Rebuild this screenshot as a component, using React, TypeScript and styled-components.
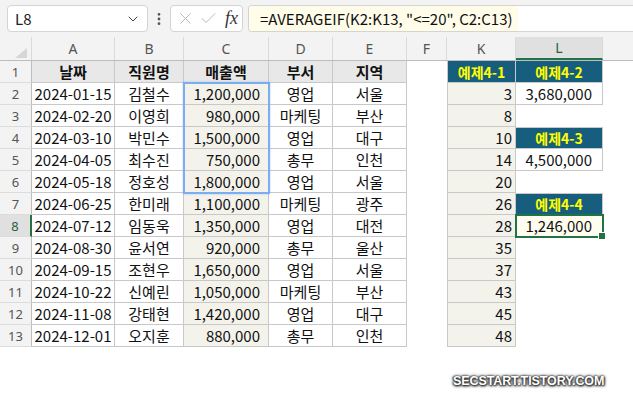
import styled, { createGlobalStyle } from 'styled-components';
import { ChevronDown, EllipsisVertical, X, Check } from 'lucide-react';

const GlobalStyle = createGlobalStyle`
  html, body { margin: 0; padding: 0; background: #fff; }
  body { font-family: "Noto Sans CJK KR", "Noto Sans", sans-serif; color: #111; }
  * { box-sizing: border-box; }
`;

const COLS = '32px 83px 69px 85px 64px 74px 40px 69px 87px 1fr';

const Page = styled.div`
  position: relative;
  width: 633px;
  height: 396px;
  overflow: hidden;
  background: #fff;
`;

const TopBar = styled.div`
  height: 37px;
  background: #f3f3f3;
  display: flex;
  align-items: flex-start;
  padding: 5px 0 0 7px;
`;

const NameBox = styled.div`
  width: 141px;
  height: 27px;
  background: #fff;
  border: 1px solid #d4d4d4;
  border-radius: 4px;
  display: flex;
  align-items: center;
  justify-content: space-between;
  padding: 0 6px 0 7px;
  font-size: 15px;
  color: #222;
`;

const Dots = styled.div`
  width: 22px;
  height: 27px;
  display: flex;
  align-items: center;
  justify-content: center;
  color: #555;
`;

const ButtonBox = styled.div`
  width: 73px;
  height: 27px;
  background: #fff;
  border: 1px solid #d4d4d4;
  border-radius: 4px;
  display: flex;
  align-items: center;
  gap: 4px;
  padding-left: 5px;
  color: #b4b4b4;
`;

const Fx = styled.span`
  font-family: "Liberation Serif", serif;
  font-style: italic;
  font-size: 18px;
  color: #333;
  margin-left: 3px;
`;

const FormulaBox = styled.div`
  flex: 1;
  margin-left: 5px;
  height: 27px;
  background: #fff;
  border: 1px solid #d4d4d4;
  border-right: none;
  border-radius: 4px 0 0 4px;
  display: flex;
  overflow: hidden;
`;

const FormulaText = styled.span`
  display: flex;
  align-items: center;
  background: #fffdea;
  padding: 0 5px 0 11px;
  font-size: 15px;
  color: #111;
  white-space: pre;
`;

const HeaderRow = styled.div`
  display: grid;
  grid-template-columns: ${COLS};
  height: 24px;
  background: #f3f3f3;
  border-bottom: 1px solid #bdbdbd;
`;

const ColHead = styled.div<{ $sel?: boolean }>`
  display: flex;
  align-items: center;
  justify-content: center;
  font-family: "Noto Sans", sans-serif;
  font-size: 14px;
  color: ${({ $sel }) => ($sel ? '#24623f' : '#555')};
  background: ${({ $sel }) => ($sel ? '#e0e0e0' : 'transparent')};
  border-right: 1px solid #dadada;
  border-bottom: ${({ $sel }) => ($sel ? '2px solid #217346' : 'none')};
`;

const Corner = styled.div`
  display: flex;
  align-items: flex-end;
  justify-content: flex-end;
  padding: 0 4px 2px 0;
  border-right: 1px solid #dadada;
`;

const Body = styled.div`
  position: relative;
`;

const Row = styled.div`
  display: grid;
  grid-template-columns: ${COLS};
  height: 22px;
`;

const RowHead = styled.div<{ $sel?: boolean }>`
  display: flex;
  align-items: center;
  justify-content: center;
  font-family: "Noto Sans", sans-serif;
  font-size: 13px;
  color: ${({ $sel }) => ($sel ? '#24623f' : '#555')};
  background: ${({ $sel }) => ($sel ? '#e0e0e0' : '#f3f3f3')};
  border-bottom: 1px solid #dcdcdc;
  border-right: ${({ $sel }) => ($sel ? '2px solid #217346' : '1px solid #bdbdbd')};
`;

type Tone = 'plain' | 'head' | 'beige' | 'blue' | 'active' | 'none';

const fills: Record<Tone, string> = {
  plain: '#fff',
  head: '#e8e8e8',
  beige: '#f3f2eb',
  blue: '#175d7e',
  active: '#fffdef',
  none: '#fff',
};

const Cell = styled.div<{ $tone: Tone; $align?: 'center' | 'right'; $pr?: number; $bl?: boolean; $bt?: boolean }>`
  position: relative;
  display: flex;
  align-items: center;
  justify-content: ${({ $align }) => ($align === 'right' ? 'flex-end' : 'center')};
  padding-right: ${({ $pr, $align }) => ($align === 'right' ? $pr ?? 3 : 0)}px;
  font-size: 15px;
  white-space: nowrap;
  background: ${({ $tone }) => fills[$tone]};
  color: ${({ $tone }) => ($tone === 'blue' ? '#ffff00' : '#111')};
  font-weight: ${({ $tone }) => ($tone === 'head' || $tone === 'blue' ? 700 : 400)};
  ${({ $tone }) => ($tone === 'blue' ? 'font-size: 14px;' : '')}
  border-right: ${({ $tone }) => ($tone === 'none' ? 'none' : '1px solid #c8c8c8')};
  border-bottom: ${({ $tone }) => ($tone === 'none' ? 'none' : '1px solid #c8c8c8')};
  border-left: ${({ $bl }) => ($bl ? '1px solid #c8c8c8' : 'none')};
  border-top: ${({ $bt }) => ($bt ? '1px solid #c8c8c8' : 'none')};
  ${({ $tone }) =>
    $tone === 'active'
      ? `outline: 2px solid #217346; outline-offset: -1px; z-index: 2;
         &::after { content: ''; position: absolute; right: -4px; bottom: -4px; width: 6px; height: 6px;
           background: #217346; border: 1px solid #fff; }`
      : ''}
`;

const RangeBox = styled.div`
  position: absolute;
  left: 183px;
  top: 21px;
  width: 87px;
  height: 112px;
  border: 2px solid #7aaef0;
  box-shadow: 0 0 2px rgba(90, 150, 230, 0.45);
  pointer-events: none;
`;

const Watermark = styled.div`
  position: absolute;
  left: 453px;
  top: 374px;
  font-family: "Liberation Sans", Arial, sans-serif;
  font-weight: 700;
  font-size: 12.5px;
  letter-spacing: -0.1px;
  color: #fff;
  text-shadow: 0 0 2px #222, 1px 1px 2px #333, -1px 0 2px #444, 0 1px 3px #666, 0 0 4px #888;
`;

const heads = ['날짜', '직원명', '매출액', '부서', '지역'];

const data = [
  ['2024-01-15', '김철수', '1,200,000', '영업', '서울'],
  ['2024-02-20', '이영희', '980,000', '마케팅', '부산'],
  ['2024-03-10', '박민수', '1,500,000', '영업', '대구'],
  ['2024-04-05', '최수진', '750,000', '총무', '인천'],
  ['2024-05-18', '정호성', '1,800,000', '영업', '서울'],
  ['2024-06-25', '한미래', '1,100,000', '마케팅', '광주'],
  ['2024-07-12', '임동욱', '1,350,000', '영업', '대전'],
  ['2024-08-30', '윤서연', '920,000', '총무', '울산'],
  ['2024-09-15', '조현우', '1,650,000', '영업', '서울'],
  ['2024-10-22', '신예린', '1,050,000', '마케팅', '부산'],
  ['2024-11-08', '강태현', '1,420,000', '영업', '대구'],
  ['2024-12-01', '오지훈', '880,000', '총무', '인천'],
];

const kValues = [3, 8, 10, 14, 20, 26, 28, 35, 37, 43, 45, 48];

// L column, keyed by sheet row number
const lCells: Record<number, { tone: Tone; text: string }> = {
  1: { tone: 'blue', text: '예제4-2' },
  2: { tone: 'plain', text: '3,680,000' },
  4: { tone: 'blue', text: '예제4-3' },
  5: { tone: 'plain', text: '4,500,000' },
  7: { tone: 'blue', text: '예제4-4' },
  8: { tone: 'active', text: '1,246,000' },
};

const letters = ['A', 'B', 'C', 'D', 'E', 'F', 'K', 'L'];

const LCell = ({ r }: { r: number }) => {
  const c = lCells[r];
  if (!c) return <Cell $tone="none" />;
  const prev = lCells[r - 1];
  const num = c.tone !== 'blue';
  return (
    <Cell $tone={c.tone} $align={num ? 'right' : 'center'} $pr={10} $bt={r > 1 && !prev}>
      {c.text}
    </Cell>
  );
};

const App = () => (
  <Page>
    <GlobalStyle />
    <TopBar>
      <NameBox>
        <span>L8</span>
        <ChevronDown size={16} strokeWidth={1.5} color="#444" />
      </NameBox>
      <Dots>
        <EllipsisVertical size={16} strokeWidth={2.2} />
      </Dots>
      <ButtonBox>
        <X size={19} strokeWidth={1.2} />
        <Check size={19} strokeWidth={1.2} />
        <Fx>fx</Fx>
      </ButtonBox>
      <FormulaBox>
        <FormulaText>{'=AVERAGEIF(K2:K13, "<=20", C2:C13)'}</FormulaText>
      </FormulaBox>
    </TopBar>

    <HeaderRow>
      <Corner>
        <svg width="12" height="10" viewBox="0 0 12 10">
          <polygon points="12,0 12,10 0,10" fill="#d6d6d6" />
        </svg>
      </Corner>
      {letters.map((l) => (
        <ColHead key={l} $sel={l === 'L'}>{l}</ColHead>
      ))}
      <div />
    </HeaderRow>

    <Body>
      <Row>
        <RowHead>1</RowHead>
        {heads.map((h) => (
          <Cell key={h} $tone="head">{h}</Cell>
        ))}
        <Cell $tone="none" />
        <Cell $tone="blue" $bl>예제4-1</Cell>
        <LCell r={1} />
      </Row>
      {data.map((d, i) => {
        const r = i + 2;
        return (
          <Row key={r}>
            <RowHead $sel={r === 8}>{r}</RowHead>
            <Cell $tone="plain">{d[0]}</Cell>
            <Cell $tone="plain">{d[1]}</Cell>
            <Cell $tone="beige" $align="right" $pr={8}>{d[2]}</Cell>
            <Cell $tone="plain">{d[3]}</Cell>
            <Cell $tone="plain">{d[4]}</Cell>
            <Cell $tone="none" />
            <Cell $tone="beige" $align="right" $pr={3} $bl>{kValues[i]}</Cell>
            <LCell r={r} />
          </Row>
        );
      })}
      <RangeBox />
    </Body>

    <Watermark>SECSTART.TISTORY.COM</Watermark>
  </Page>
);

export default App;
